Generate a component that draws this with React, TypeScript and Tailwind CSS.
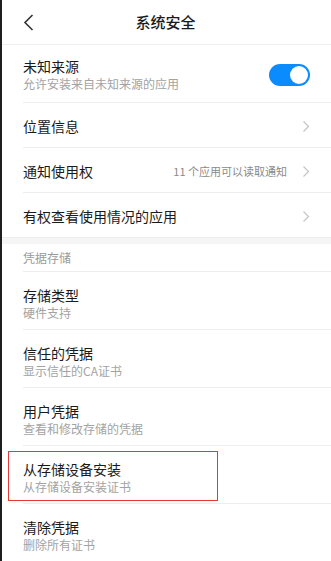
import React from "react";

const font = { fontFamily: '"Noto Sans CJK SC", "Noto Sans", sans-serif' };

function Chevron() {
  return (
    <svg width="8" height="13" viewBox="0 0 8 13" className="shrink-0">
      <path d="M1.5 1.5 L6.5 6.5 L1.5 11.5" fill="none" stroke="#c4c4c4" strokeWidth="1.2" />
    </svg>
  );
}

function Divider() {
  return <div className="ml-[23px] h-px bg-[#eeeeee]" />;
}

function DoubleRow({ title, sub }: { title: string; sub: string }) {
  return (
    <div className="h-[57px] pl-[23px] pr-[20px] pt-[14px] flex flex-col">
      <div className="text-[14px] leading-[18px] text-[#1a1a1a]">{title}</div>
      <div className="text-[12px] leading-[16px] mt-px text-[#a3a3a3]">{sub}</div>
    </div>
  );
}

function SingleRow({ title, right }: { title: string; right?: string }) {
  return (
    <div className="h-[44px] pl-[23px] pr-[21px] pt-[2px] flex items-center">
      <div className="flex-1 text-[14px] leading-[18px] text-[#1a1a1a]">{title}</div>
      {right && <div className="text-[11px] text-[#8a8a8a] mr-[15px]">{right}</div>}
      <Chevron />
    </div>
  );
}

export default function App() {
  return (
    <div className="w-[331px] h-[561px] bg-white relative overflow-hidden border-l-2 border-[#1e1e1e]" style={font}>
      <div className="w-[331px] -ml-[2px]">
        {/* Header */}
        <div className="h-[45px] flex items-center relative border-b border-[#f0f0f0]">
          <svg width="12" height="18" viewBox="0 0 12 18" className="absolute left-[23px] top-[14px]">
            <path d="M9.5 1 L2 8.5 L9.5 16" fill="none" stroke="#333333" strokeWidth="1.6" />
          </svg>
          <div className="flex-1 text-center text-[15px] font-medium text-[#1a1a1a] pt-[1px]">系统安全</div>
        </div>

        {/* 未知来源 */}
        <div className="h-[57px] pl-[23px] pr-[21px] flex items-center">
          <div className="flex-1 flex flex-col pt-[1px]">
            <div className="text-[14px] leading-[18px] text-[#1a1a1a]">未知来源</div>
            <div className="text-[12px] leading-[16px] mt-px text-[#a3a3a3]">允许安装来自未知来源的应用</div>
          </div>
          <div className="w-[41px] h-[22px] rounded-full bg-[#0a8cff] flex items-center justify-end pr-[2px] mt-[2px]">
            <div className="w-[18px] h-[18px] rounded-full bg-white" />
          </div>
        </div>
        <Divider />
        <SingleRow title="位置信息" />
        <Divider />
        <SingleRow title="通知使用权" right="11 个应用可以读取通知" />
        <Divider />
        <SingleRow title="有权查看使用情况的应用" />

        {/* gap band */}
        <div className="h-[7px] bg-[#f5f5f5] border-t border-[#ededed]" />

        <div className="h-[27px] pl-[23px] flex items-center text-[12px] text-[#9a9a9a] pt-[1px]">凭据存储</div>
        <Divider />
        <DoubleRow title="存储类型" sub="硬件支持" />
        <Divider />
        <DoubleRow title="信任的凭据" sub="显示信任的CA证书" />
        <Divider />
        <DoubleRow title="用户凭据" sub="查看和修改存储的凭据" />
        <Divider />
        <DoubleRow title="从存储设备安装" sub="从存储设备安装证书" />
        <Divider />
        <DoubleRow title="清除凭据" sub="删除所有证书" />
      </div>

      {/* annotation box */}
      <div className="absolute left-[6px] top-[451px] w-[210px] h-[50px] border-[1.5px] border-[#e53935]" />
    </div>
  );
}
